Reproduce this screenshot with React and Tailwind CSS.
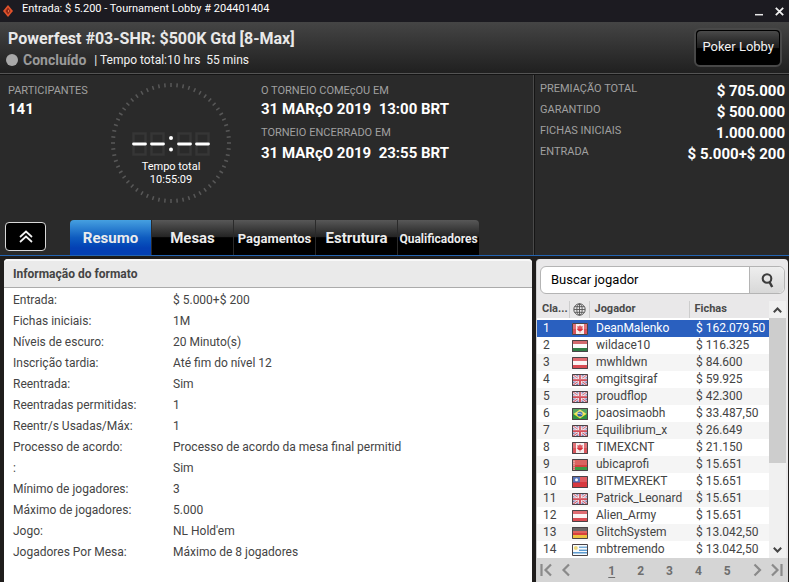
/*
 * File: App.jsx
 * ROLE: Tournament Lobby
 * FEATURES: Header, Clock, Tabs, Format Info, Player List
 */

import { useState } from "react";
import clsx from "clsx";

const TABS = [
  { id: "resumo", label: "Resumo", size: "text-[15px]" },
  { id: "mesas", label: "Mesas", size: "text-[15px]" },
  { id: "pagamentos", label: "Pagamentos", size: "text-[13px]" },
  { id: "estrutura", label: "Estrutura", size: "text-[15px]" },
  { id: "qualificadores", label: "Qualificadores", size: "text-[12px]" },
];

const PRIZES = [
  ["PREMIAÇÃO TOTAL", "$ 705.000"],
  ["GARANTIDO", "$ 500.000"],
  ["FICHAS INICIAIS", "1.000.000"],
  ["ENTRADA", "$ 5.000+$ 200"],
];

const FORMAT = [
  ["Entrada:", "$ 5.000+$ 200"],
  ["Fichas iniciais:", "1M"],
  ["Níveis de escuro:", "20 Minuto(s)"],
  ["Inscrição tardia:", "Até fim do nível 12"],
  ["Reentrada:", "Sim"],
  ["Reentradas permitidas:", "1"],
  ["Reentr/s Usadas/Máx:", "1"],
  ["Processo de acordo:", "Processo de acordo da mesa final permitid"],
  [":", "Sim"],
  ["Mínimo de jogadores:", "3"],
  ["Máximo de jogadores:", "5.000"],
  ["Jogo:", "NL Hold'em"],
  ["Jogadores Por Mesa:", "Máximo de 8 jogadores"],
];

const PLAYERS = [
  ["ca", "DeanMalenko", "$ 162.079,50"],
  ["hu", "wildace10", "$ 116.325"],
  ["at", "mwhldwn", "$ 84.600"],
  ["gb", "omgitsgiraf", "$ 59.925"],
  ["gb", "proudflop", "$ 42.300"],
  ["br", "joaosimaobh", "$ 33.487,50"],
  ["gb", "Equilibrium_x", "$ 26.649"],
  ["ca", "TIMEXCNT", "$ 21.150"],
  ["by", "ubicaprofi", "$ 15.651"],
  ["tw", "BITMEXREKT", "$ 15.651"],
  ["gb", "Patrick_Leonard", "$ 15.651"],
  ["at", "Alien_Army", "$ 15.651"],
  ["de", "GlitchSystem", "$ 13.042,50"],
  ["uy", "mbtremendo", "$ 13.042,50"],
];

const FLAG_ART = {
  ca: (
    <>
      <path fill="#f6eeee" d="M0 0h16v12H0z" />
      <path fill="#d8535a" d="M0 0h4v12H0zM12 0h4v12h-4z" />
      <path fill="#d8323c" d="M8 2l1 1.500L10.700 3l-.4 2.500 1 .5-2 2H8.400v1.500h-.8V8H6.700l-2-2 1-.5L5.300 3 7 3.500z" />
    </>
  ),
  hu: (
    <>
      <path fill="#c94a50" d="M0 0h16v4H0z" />
      <path fill="#fbfbfb" d="M0 4h16v4H0z" />
      <path fill="#2f7d46" d="M0 8h16v4H0z" />
    </>
  ),
  at: (
    <>
      <path fill="#d94b52" d="M0 0h16v12H0z" />
      <path fill="#fbf3f3" d="M0 4h16v4H0z" />
    </>
  ),
  gb: (
    <>
      <path fill="#7d78ae" d="M0 0h16v12H0z" />
      <path stroke="#f3eff5" strokeWidth="2.600" d="M0 0l16 12M16 0L0 12" />
      <path stroke="#d0616e" strokeWidth="1.100" d="M0 0l16 12M16 0L0 12" />
      <path stroke="#f8f4f6" strokeWidth="3.200" d="M8 0v12M0 6h16" />
      <path stroke="#d2505c" strokeWidth="2" d="M8 0v12M0 6h16" />
    </>
  ),
  br: (
    <>
      <path fill="#2f9140" d="M0 0h16v12H0z" />
      <path fill="#efe34a" d="M8 1.500L14.500 6 8 10.500 1.500 6z" />
      <circle cx="8" cy="6" r="2.600" fill="#2f5fa8" />
      <path stroke="#dfe9f4" strokeWidth=".7" fill="none" d="M5.600 5.500q2.600-.5 4.800 1.300" />
    </>
  ),
  by: (
    <>
      <path fill="#d3423f" d="M0 0h16v8H0z" />
      <path fill="#3b9a45" d="M0 8h16v4H0z" />
      <path fill="#dc8a84" d="M1 1h2v10H1z" />
      <path stroke="#c8393c" strokeDasharray="1 1" d="M2 1v10" />
    </>
  ),
  tw: (
    <>
      <path fill="#d8393f" d="M0 0h16v12H0z" />
      <path fill="#3355a8" d="M0 0h8v6.500H0z" />
      <circle cx="4.500" cy="3.700" r="1.500" fill="#f3f5fa" />
    </>
  ),
  de: (
    <>
      <path fill="#4b4444" d="M0 0h16v4H0z" />
      <path fill="#d8413c" d="M0 4h16v4H0z" />
      <path fill="#ecc240" d="M0 8h16v4H0z" />
    </>
  ),
  uy: (
    <>
      <path fill="#f8fafc" d="M0 0h16v12H0z" />
      <path fill="#5d9bd0" d="M7 2.500h9v1.500H7zM7 5.500h9V7H7zM0 8h16v1.500H0z" />
      <circle cx="3.800" cy="4" r="2" fill="#e8cf62" />
    </>
  ),
};

function Flag({ code }) {
  return (
    <svg viewBox="0 0 16 12" className="block h-3 w-4" fill="none" role="img" aria-label={code}>
      {FLAG_ART[code]}
      <path fill="#ffffff" fillOpacity=".18" d="M0 0h16v6H0z" />
      <path stroke="#4a4448" d="M.5 .5h15v11H.5z" />
    </svg>
  );
}

function Globe() {
  return (
    <svg viewBox="0 0 13 13" className="mx-auto block size-[13px]" fill="none" stroke="#555" aria-label="País">
      <circle cx="6.500" cy="6.500" r="5.700" />
      <ellipse cx="6.500" cy="6.500" rx="2.700" ry="5.700" strokeWidth=".9" />
      <path strokeWidth=".9" d="M6.500 1v11M1 6.500h11M1.800 3.700h9.400M1.800 9.300h9.400" />
    </svg>
  );
}

// One unlit seven segment digit with its middle bar on
function Digit({ x }) {
  return (
    <g transform={`translate(${x} 0)`}>
      <path stroke="#363636" strokeWidth="2.500" d="M1.500 1.500h12v21h-12z" />
      <path stroke="#fff" strokeWidth="2.800" strokeLinecap="round" d="M1.500 12h12" />
    </g>
  );
}

function Clock() {
  const ticks = Array.from({ length: 60 }, (_, i) => i * 6);
  return (
    <div className="relative flex size-[120px] shrink-0 flex-col items-center pt-[49px] text-[11px] leading-[13px] text-white">
      <svg viewBox="0 0 120 120" className="absolute inset-0 size-full" aria-hidden="true">
        {ticks.map((deg) => (
          <path key={deg} d="M60 0v4" stroke="#585858" strokeWidth="1.500" transform={`rotate(${deg} 60 60)`} />
        ))}
      </svg>
      <svg viewBox="0 0 78 24" className="mb-1 h-6 w-[78px]" fill="none" aria-label="--:--">
        <Digit x={0} />
        <Digit x={18} />
        <circle cx="39" cy="6" r="2" fill="#fff" />
        <circle cx="39" cy="17.500" r="2" fill="#fff" />
        <Digit x={45} />
        <Digit x={63} />
      </svg>
      <span>Tempo total</span>
      <span>10:55:09</span>
    </div>
  );
}

function PagerArrow({ label, d }) {
  return (
    <button type="button" aria-label={label}>
      <svg viewBox="0 0 12 14" className="h-3.5 w-3" fill="none" stroke="#8a8a8a" strokeWidth="2.200">
        <path d={d} />
      </svg>
    </button>
  );
}

function Header() {
  return (
    <header>
      <div className="flex h-[22px] items-center bg-[#1c1b21] pl-[3px] text-[11px] text-white">
        <svg viewBox="0 0 10 12" className="h-3 w-2.5" aria-hidden="true">
          <path fill="#e2532c" d="M5 0l5 6-5 6-5-6z" />
          <path fill="#8e2716" d="M5 2.500L7.600 6 5 9.500 2.400 6z" />
          <path fill="#f08a5c" d="M5 4.500L6.200 6 5 7.500z" />
        </svg>
        <span className="mb-1 ml-[9px]">Entrada: $ 5.200 - Tournament Lobby # 204401404</span>
        <div className="ml-auto flex items-center gap-3 pr-[5px]">
          <button type="button" aria-label="Minimizar">
            <svg viewBox="0 0 8 10" className="h-2.5 w-2" stroke="#e8e8e8" strokeWidth="1.500">
              <path d="M0 8.700h8" />
            </svg>
          </button>
          <button type="button" aria-label="Fechar">
            <svg viewBox="0 0 9 9" className="size-[9px]" stroke="#f0f0f0" strokeWidth="1.800">
              <path d="M.8 .8l7.400 7.400M8.200 .8L.8 8.200" />
            </svg>
          </button>
        </div>
      </div>

      <div className="flex items-center justify-between border-b border-[#545454] bg-linear-to-b from-[#454545] to-[#202020] pr-[7px] pl-2">
        <div className="flex h-[51px] flex-col pt-[7px]">
          <h1 className="text-[16px] leading-5 font-bold text-[#e9e9e9]">Powerfest #03-SHR: $500K Gtd [8-Max]</h1>
          <p className="flex items-center text-[12px] leading-[22px] text-[#f2f2f2]">
            <span className="-ml-0.5 size-3 rounded-full bg-[#a9a9a9]" />
            <span className="mr-2 ml-[5px] text-[14px] font-bold text-[#9a9a9a]">Concluído</span>
            <span className="whitespace-pre">| Tempo total:10 hrs  55 mins</span>
          </p>
        </div>
        <button
          type="button"
          className="h-[39px] rounded-md border-2 border-[#484848] bg-black p-px text-[13px] text-[#f2f2f2]"
        >
          <span className="flex h-full items-center rounded bg-linear-to-b from-[#4a4a4a] via-[#1c1c1c] via-50% to-black to-55% px-[5px] pb-0.5">
            Poker Lobby
          </span>
        </button>
      </div>
    </header>
  );
}

function Summary({ tab, onTab }) {
  return (
    <section className="flex border-t border-b border-t-[#141414] border-b-[#2464b0] bg-[#2a2a2a]">
      <div className="flex min-w-0 flex-1 flex-col border-r border-[#4a4a4a]">
        <div className="flex flex-1 pt-2 pb-[17px] pl-2">
          <dl className="w-[103px] text-[11px] leading-4 text-[#a0a0a0]">
            <dt>PARTICIPANTES</dt>
            <dd className="text-[15px] leading-5 font-bold text-white">141</dd>
          </dl>
          <Clock />
          <dl className="ml-[30px] text-[11px] leading-4 text-[#a0a0a0]">
            <dt>O TORNEIO COMEçOU EM</dt>
            <dd className="mb-1.5 text-[15px] leading-5 font-bold whitespace-pre text-white">
              31 MARçO 2019  13:00 BRT
            </dd>
            <dt>TORNEIO ENCERRADO EM</dt>
            <dd className="mt-0.5 text-[15px] leading-5 font-bold whitespace-pre text-white">
              31 MARçO 2019  23:55 BRT
            </dd>
          </dl>
        </div>

        <div className="flex items-end">
          <button
            type="button"
            aria-label="Recolher"
            className="mr-6 mb-1 ml-[5px] flex h-[29px] w-[41px] items-center justify-center rounded border border-[#d8d8d8] bg-black"
          >
            <svg viewBox="0 0 14 13" className="h-[13px] w-3.5" fill="none" stroke="#f2f2f2" strokeWidth="1.700">
              <path d="M1 7l6-5.500L13 7M1 12l6-5.500 6 5.500" />
            </svg>
          </button>
          <div role="tablist" className="flex gap-px overflow-hidden rounded-t">
            {TABS.map(({ id, label, size }) => (
              <button
                key={id}
                type="button"
                role="tab"
                aria-selected={tab === id}
                onClick={() => onTab(id)}
                className={clsx(
                  "flex h-[35px] w-[81px] items-center justify-center bg-linear-to-b pt-0.5 font-bold text-[#ececec]",
                  size,
                  tab === id
                    ? "from-[#46a0e0] via-[#0f5cc0] via-50% to-[#0440b4] to-80%"
                    : "from-[#585858] via-[#242424] via-48% to-black to-52%"
                )}
              >
                {label}
              </button>
            ))}
          </div>
        </div>
      </div>

      <dl className="w-[255px] shrink-0 border-l border-[#151515] pt-[3px] pr-1 pl-[5px]">
        {PRIZES.map(([label, value]) => (
          <div key={label} className="flex h-[21px] justify-between">
            <dt className="text-[11px] leading-[22px] text-[#a0a0a0]">{label}</dt>
            <dd className="text-[15px] leading-[26px] font-bold text-white">{value}</dd>
          </div>
        ))}
      </dl>
    </section>
  );
}

function FormatInfo() {
  return (
    <section className="min-w-0 flex-1 rounded-t bg-white">
      <h2 className="h-[29px] rounded-t border-t-2 border-b border-t-[#f8f8f8] border-b-[#ababab] bg-[#eaeaea] pl-[9px] text-[12px] leading-[26px] font-bold text-[#444]">
        Informação do formato
      </h2>
      <dl className="pt-[2px] pl-[9px] text-[12px] leading-[21px] text-[#444]">
        {FORMAT.map(([label, value]) => (
          <div key={label} className="flex">
            <dt className="w-40 shrink-0">{label}</dt>
            <dd>{value}</dd>
          </div>
        ))}
      </dl>
    </section>
  );
}

function PlayerList() {
  const [selected, setSelected] = useState(0);

  return (
    <section className="flex w-[252px] shrink-0 flex-col rounded-t border-l border-[#cfcfcf] bg-[#e9e8e9]">
      <form className="mx-[3px] mt-[7px] mb-[7px] flex h-7 rounded-md border border-[#b4b4b4] bg-white">
        <input
          type="text"
          aria-label="Buscar jogador"
          placeholder="Buscar jogador"
          className="min-w-0 flex-1 rounded-l-md px-2.5 text-[13px] text-black outline-none placeholder:text-black"
        />
        <button
          type="button"
          aria-label="Buscar"
          className="flex w-[35px] items-center justify-center rounded-r-md border-l border-[#b4b4b4] bg-linear-to-b from-[#eeeeee] to-[#d8d8d8]"
        >
          <svg viewBox="0 0 13 15" className="h-[15px] w-[13px]" fill="none" stroke="#3c3c3c">
            <circle cx="6" cy="5.500" r="4.300" strokeWidth="2.100" />
            <path strokeWidth="2.500" d="M8.500 9l2.700 5" />
          </svg>
        </button>
      </form>

      <div className="flex flex-1">
        <table className="min-w-0 flex-1 table-fixed border-collapse self-start text-[12px] text-[#444]">
          <colgroup>
            <col className="w-8" />
            <col className="w-5" />
            <col className="w-[100px]" />
            <col className="w-20" />
          </colgroup>
          <thead>
            <tr className="h-[18px] border-b-2 border-white text-left text-[11px] text-[#4a4a4a]">
              <th className="border-r border-[#cdcdcd] p-0 pl-[5px]">Cla...</th>
              <th className="border-r border-[#cdcdcd] p-0">
                <Globe />
              </th>
              <th className="border-r border-[#cdcdcd] p-0 pl-[5px]">Jogador</th>
              <th className="p-0 pl-[5px]">Fichas</th>
            </tr>
          </thead>
          <tbody>
            {PLAYERS.map(([code, name, chips], i) => (
              <tr
                key={name}
                onClick={() => setSelected(i)}
                className={clsx(
                  "h-[17px] leading-[17px]",
                  selected === i ? "bg-[#2a60bf] text-white" : i % 2 ? "bg-white" : "bg-[#f5f5f5]"
                )}
              >
                <td className="p-0 pl-[6px]">{i + 1}</td>
                <td className="p-0 pl-[3px]">
                  <Flag code={code} />
                </td>
                <td className="p-0 pl-[7px]">{name}</td>
                <td className="p-0 pl-[7px] whitespace-nowrap">{chips}</td>
              </tr>
            ))}
          </tbody>
        </table>

        {/* Scrollbar */}
        <div className="mr-[2px] flex w-[17px] flex-col bg-[#f0f0f0]">
          <button type="button" aria-label="Subir" className="flex h-[17px] items-center justify-center">
            <svg viewBox="0 0 9 6" className="h-1.5 w-[9px]" fill="none" stroke="#444" strokeWidth="2">
              <path d="M.8 5.200l3.700-3.700 3.700 3.700" />
            </svg>
          </button>
          <div className="flex-1">
            <div className="h-[65%] bg-[#cdcdcd]" />
          </div>
          <button type="button" aria-label="Descer" className="flex h-[17px] items-center justify-center">
            <svg viewBox="0 0 9 6" className="h-1.5 w-[9px]" fill="none" stroke="#444" strokeWidth="2">
              <path d="M.8 .8l3.700 3.700L8.200 .8" />
            </svg>
          </button>
        </div>
      </div>

      <nav className="flex h-[25px] items-center justify-between bg-[#d5d5d5] pr-[5px] pb-0.5 pl-[3px] text-[12px] font-bold text-[#6e6e6e]">
        <div className="flex gap-2">
          <PagerArrow label="Primeira" d="M1.500 1v12M11 1.500L5.500 7l5.500 5.500" />
          <PagerArrow label="Anterior" d="M9 1.500L3.500 7 9 12.500" />
        </div>
        <div className="flex gap-[22px] pt-0.5 pl-4">
          {[1, 2, 3, 4, 5].map((n) => (
            <a key={n} href={`#p${n}`} className={n === 1 ? "underline underline-offset-2" : ""}>
              {n}
            </a>
          ))}
        </div>
        <div className="flex gap-2">
          <PagerArrow label="Próxima" d="M3.500 1.500L9 7l-5.500 5.500" />
          <PagerArrow label="Última" d="M10.500 1v12M1 1.500L6.500 7 1 12.500" />
        </div>
      </nav>
    </section>
  );
}

export default function App() {
  const [tab, setTab] = useState("resumo");

  return (
    <div className="flex min-h-screen flex-col bg-[#1f1d1c] font-[Roboto,'Liberation_Sans',sans-serif]">
      <Header />
      <Summary tab={tab} onTab={setTab} />
      <main className="flex flex-1 gap-1 pt-[3px] pr-px pl-1">
        <FormatInfo />
        <PlayerList />
      </main>
    </div>
  );
}
